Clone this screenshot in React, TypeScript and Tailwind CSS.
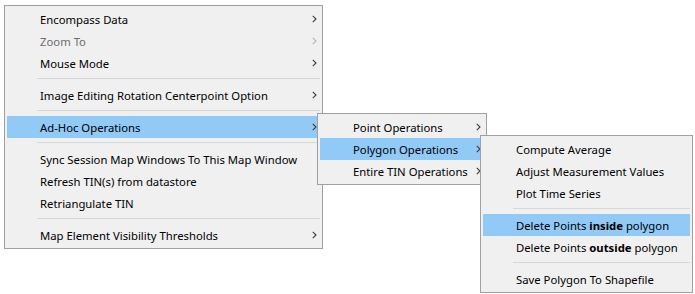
import React from "react";

type Entry =
  | { kind: "item"; label: React.ReactNode; arrow?: boolean; disabled?: boolean; active?: boolean }
  | { kind: "sep" };

function Arrow({ disabled }: { disabled?: boolean }) {
  return (
    <svg width="5" height="8" viewBox="0 0 5 8" className="shrink-0">
      <path
        d="M0.8 0.8 L4 4 L0.8 7.2"
        fill="none"
        stroke={disabled ? "#b4b4b4" : "#3c3c3c"}
        strokeWidth="1.1"
      />
    </svg>
  );
}

function Menu({ entries, className }: { entries: Entry[]; className: string }) {
  return (
    <div className={`absolute border border-[#a0a0a0] bg-[#f0f0f0] p-[2px] ${className}`}>
      {entries.map((e, i) =>
        e.kind === "sep" ? (
          <div key={i} className="h-[10px] pt-[4px] pl-[30px]">
            <div className="h-px bg-[#d7d7d7]" />
          </div>
        ) : (
          <div
            key={i}
            className={`flex h-[22px] items-center pl-[33px] pr-[3px] ${
              e.active ? "bg-[#91c9f7]" : ""
            } ${e.disabled ? "text-[#6d6d6d]" : "text-[#000]"}`}
          >
            <span className="whitespace-nowrap pt-[2px]">{e.label}</span>
            {e.arrow && (
              <span className="ml-auto flex items-center pl-[6px]">
                <Arrow disabled={e.disabled} />
              </span>
            )}
          </div>
        )
      )}
    </div>
  );
}

export default function App() {
  const main: Entry[] = [
    { kind: "item", label: "Encompass Data", arrow: true },
    { kind: "item", label: "Zoom To", arrow: true, disabled: true },
    { kind: "item", label: "Mouse Mode", arrow: true },
    { kind: "sep" },
    { kind: "item", label: "Image Editing Rotation Centerpoint Option", arrow: true },
    { kind: "sep" },
    { kind: "item", label: "Ad-Hoc Operations", arrow: true, active: true },
    { kind: "sep" },
    { kind: "item", label: "Sync Session Map Windows To This Map Window" },
    { kind: "item", label: "Refresh TIN(s) from datastore" },
    { kind: "item", label: "Retriangulate TIN" },
    { kind: "sep" },
    { kind: "item", label: "Map Element Visibility Thresholds", arrow: true },
  ];
  const sub1: Entry[] = [
    { kind: "item", label: "Point Operations", arrow: true },
    { kind: "item", label: "Polygon Operations", arrow: true, active: true },
    { kind: "item", label: "Entire TIN Operations", arrow: true },
  ];
  const sub2: Entry[] = [
    { kind: "item", label: "Compute Average" },
    { kind: "item", label: "Adjust Measurement Values" },
    { kind: "item", label: "Plot Time Series" },
    { kind: "sep" },
    {
      kind: "item",
      label: (
        <>
          Delete Points <b className="font-bold">inside</b> polygon
        </>
      ),
      active: true,
    },
    {
      kind: "item",
      label: (
        <>
          Delete Points <b className="font-bold">outside</b> polygon
        </>
      ),
    },
    { kind: "sep" },
    { kind: "item", label: "Save Polygon To Shapefile" },
  ];
  return (
    <div
      className="relative h-[294px] w-[695px] overflow-hidden bg-white text-[11.3px] leading-[16px]"
      style={{ fontFamily: '"Noto Sans", "Open Sans", sans-serif' }}
    >
      <Menu entries={main} className="left-[4px] top-[5px] w-[319px]" />
      <Menu entries={sub1} className="left-[317px] top-[113px] w-[170px]" />
      <Menu entries={sub2} className="left-[480px] top-[135px] w-[213px]" />
    </div>
  );
}
